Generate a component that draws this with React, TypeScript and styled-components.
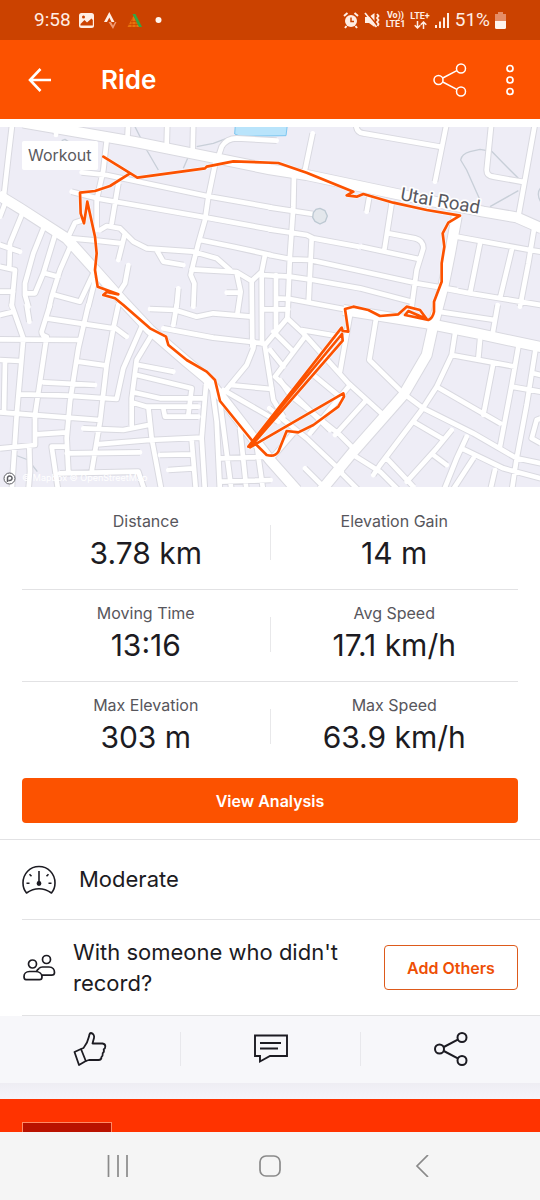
import React from "react";
import styled, { createGlobalStyle } from "styled-components";

const GlobalStyle = createGlobalStyle`
  *, *::before, *::after { box-sizing: border-box; }
  body {
    margin: 0;
    background: #fff;
    color: #1c1b22;
    font-family: Inter, "Liberation Sans", sans-serif;
  }
  button { font-family: inherit; color: inherit; cursor: pointer; }
  svg { display: block; }
`;

const Screen = styled.div`
  min-height: 100vh;
  display: flex;
  flex-direction: column;
`;

/* ---------- status bar ---------- */

const StatusBar = styled.div`
  height: 40px;
  padding: 0 34px;
  display: flex;
  align-items: center;
  justify-content: space-between;
  background: #cb4200;
  color: #ffeee4;
  font-family: Roboto, sans-serif;
`;

const StatusGroup = styled.div<{ $gap: number }>`
  display: flex;
  align-items: center;
  gap: ${(p) => p.$gap}px;
`;

const StatusText = styled.span`
  font-size: 19px;
  line-height: 24px;
`;

const NetworkLabel = styled.span`
  display: flex;
  flex-direction: column;
  align-items: center;
  font-size: 9px;
  line-height: 9px;
  font-weight: 700;
`;

/* ---------- app bar ---------- */

const AppBar = styled.header`
  height: 79px;
  padding: 0 18px 0 24px;
  display: flex;
  align-items: center;
  background: #fc5200;
  color: #fff;
`;

const IconButton = styled.button`
  padding: 0;
  border: 0;
  background: none;
  display: flex;
  align-items: center;
  justify-content: center;
`;

const Title = styled.h1`
  flex: 1;
  margin: 0 0 0 45px;
  font-size: 26px;
  line-height: 32px;
  font-weight: 600;
`;

const AppBarActions = styled.div`
  display: flex;
  align-items: center;
  gap: 31px;
`;

/* ---------- map ---------- */

const MapArea = styled.section`
  position: relative;
  margin-top: 8px;
  background: #eeedf6;
`;

const MapDrawing = styled.svg`
  width: 100%;
  height: auto;
`;

const MapTag = styled.span`
  position: absolute;
  top: 14px;
  left: 22px;
  padding: 0 6px;
  border-radius: 2px;
  background: #fff;
  color: #5b5a60;
  font-size: 16px;
  line-height: 29px;
`;

const Attribution = styled.div`
  position: absolute;
  left: 3px;
  bottom: 1px;
  display: flex;
  align-items: center;
  gap: 6px;
  color: #fff;
  font-size: 9px;
  line-height: 16px;
`;

/* ---------- stats ---------- */

const Stats = styled.dl`
  margin: 0 22px;
  padding: 11px 0 0;
`;

const StatRow = styled.div`
  height: 92px;
  padding-top: 11px;
  display: grid;
  grid-template-columns: 1fr 1px 1fr;
  border-bottom: 1px solid #e2e2e4;
  &:last-child { border-bottom: 0; }
`;

const StatDivider = styled.div`
  height: 35px;
  margin-top: 16px;
  background: #e8e8ea;
`;

const Stat = styled.div`
  text-align: center;
`;

const StatLabel = styled.dt`
  font-size: 16px;
  line-height: 24px;
  color: #57565c;
`;

const StatValue = styled.dd`
  margin: 0;
  font-size: 30px;
  line-height: 40px;
`;

const ButtonRow = styled.div`
  padding: 4px 22px 16px;
`;

const PrimaryButton = styled.button`
  display: block;
  width: 100%;
  height: 45px;
  border: 0;
  border-radius: 4px;
  background: #fc5200;
  && { color: #fff; }
  font-size: 16px;
  font-weight: 600;
`;

/* ---------- detail rows ---------- */

const DetailRow = styled.div<{ $height: number; $gap: number; $inset?: boolean }>`
  min-height: ${(p) => p.$height}px;
  display: flex;
  align-items: center;
  gap: ${(p) => p.$gap}px;
  margin-left: ${(p) => (p.$inset ? 22 : 0)}px;
  padding: 0 22px 0 ${(p) => (p.$inset ? 0 : 22)}px;
  border-top: 1px solid #e2e2e4;
`;

const DetailText = styled.p`
  flex: 1;
  margin: 0;
  font-size: 22px;
  line-height: 31px;
`;

const OutlineButton = styled.button`
  width: 134px;
  height: 45px;
  padding: 0;
  border: 1px solid #dd5a1b;
  border-radius: 4px;
  background: #fff;
  && { color: #ee4f06; }
  font-size: 16px;
  font-weight: 600;
`;

/* ---------- social bar ---------- */

const SocialBar = styled.div`
  height: 68px;
  display: grid;
  grid-template-columns: repeat(3, 1fr);
  align-items: center;
  background: linear-gradient(90deg, #fff 22px, #e2e2e4 22px) top / 100% 1px no-repeat, #f7f7fa;
`;

const SocialButton = styled(IconButton)`
  height: 34px;
  border-left: 1px solid #e8e8ec;
  &:first-child { border-left: 0; }
`;

const SectionGap = styled.div`
  height: 16px;
  background: linear-gradient(#eeedf3, #f5f4fa);
`;

const Banner = styled.section`
  flex: 1;
  min-height: 32px;
  padding: 23px 22px 0;
  display: flex;
  background: #ff3300;
`;

const BannerBadge = styled.div`
  width: 90px;
  border: 1px solid #ff8a66;
  border-bottom: 0;
  background: #b91200;
`;

/* ---------- system navigation ---------- */

const SystemNav = styled.nav`
  height: 68px;
  padding: 0 42px;
  display: grid;
  grid-template-columns: repeat(3, 1fr);
  align-items: center;
  background: #f5f5f5;
  color: #8a8a8a;
`;

/* ---------- map data ---------- */

/* Minor roads, grouped by district; each district has its own origin. */
const districts = [
  {
    name: "north-west",
    x: 0,
    y: 0,
    roads:
      "M38 0L25 110L12 225 M170 0L168 45 M322 45L310 150L290 240L290 330 M385 0L382 60 M502 0L500 80 M580 0L578 90 M830 62L710 55Q680 55 665 80L655 110 M245 157L320 165L620 228L812 262 M215 215L300 237L615 292L812 328 M650 110L625 230L615 300L595 370L580 430L572 465L583 490L580 560 M355 190L335 310 M205 350L225 308L250 300 M300 330L320 318L360 325L400 365L440 385L580 395L650 415L690 450 M215 355L290 362L365 370 M375 340L355 420 M470 390L490 425L550 435 M600 360L700 380L812 405 M385 435L375 490L352 525 M535 505L530 560 M65 285L30 370L28 440 M0 375L60 395 M15 250L0 290 M130 325L100 400L75 490L75 525L85 560 M165 345L130 460L105 520L75 520 M215 370L180 450L155 530L148 560 M135 460L175 470 M165 525L240 545L285 450 M0 440L45 450L35 560 M0 515L40 515 M285 480L265 560",
  },
  {
    name: "north-east",
    x: 810,
    y: 0,
    roads:
      "M128 40L105 150 M258 0Q255 38 280 40L510 80 M532 0L495 185 M665 0L650 150Q650 168 670 170L755 185 M797 0L745 290 M72 165L70 260L60 405L52 595 M-2 262L130 282 M-2 328L110 345L130 355L265 380 M275 380L450 418 M298 230L290 275 M365 250L343 390 M355 340L435 355Q460 362 460 385L440 450L425 560 M-2 405L65 418L120 420L440 490L560 510 M125 355L116 545 M560 350L780 390L812 395 M630 370L600 520 M725 390L690 535 M795 310L775 430L750 560 M520 505L600 520L812 555",
  },
  {
    name: "centre",
    x: 0,
    y: 0,
    roads:
      "M575 448L710 456L755 483L785 455L795 405 M785 465L870 470L940 480L1080 505L1235 545 M755 483L757 680 M785 455L786 670 M828 465L828 640 M790 568L865 568 M830 535L870 537L1030 567 M710 460L722 515L712 582 M680 518L720 518 M862 595L795 675 M862 595L910 640L1045 790L1150 885 M905 630L1025 650 M820 635L880 695 M810 690L850 740 M915 650L825 770L990 930 M795 680L820 840L850 890",
  },
  {
    name: "south-west",
    x: 0,
    y: 555,
    roads:
      "M35 0L70 100L50 330L35 560 M80 0L88 50 M0 30L40 20 M150 0L125 80Q125 92 140 95L120 230L105 330L105 420L0 430 M140 40L340 70 M265 0L235 130L210 290L200 400L205 500 M355 0L340 70L320 180L300 350L275 500 M340 65L380 95 M0 103L235 105 M0 165L60 168 M15 170L12 320 M130 232L285 240 M235 170L320 182 M60 268L200 272L350 282L370 190L425 65 M0 322L300 345 M110 388L200 382 M250 370L370 375L445 360 M290 418L450 405L605 398 M200 445L420 442 M200 425L155 425L175 560 M180 505L415 500L435 560 M88 430L90 500L85 560 M455 90L410 165L395 280L395 360 M415 180L520 200 M410 210L575 250L565 330 M400 262L480 280L610 280 M395 292L440 305L595 305 M490 310L495 335L595 335 M445 305L455 400L485 560 M480 450L575 448 M505 495L580 490 M575 405L588 560 M618 240L605 400L615 560 M635 240L650 350L660 560 M660 290L695 560 M720 370L740 560 M770 420L790 560 M660 460L812 455 M660 530L812 525 M450 12L525 15L590 35L640 25L755 35 M530 0L520 60 M490 70L640 98L790 115 M762 110L760 130L740 180L670 265 M670 255L835 350 M690 240L815 252",
  },
  {
    name: "south-east",
    x: 810,
    y: 555,
    roads:
      "M240 30L210 200 M130 210L215 280 M30 225L60 270L210 390L250 430 M240 240L120 385 M285 290L195 390 M-2 310L110 400L215 500 M105 490L175 560 M320 30L298 165L400 265L460 310L610 385L740 460L812 475 M505 20L675 45 M683 0L668 85 M555 85L545 150L500 245L455 315L330 480L310 510 M545 150L735 185 M630 105L625 160 M670 175L640 330 M500 245L690 355 M745 125L725 240L690 425 M725 245L812 260 M797 130L770 300L740 460L725 560 M790 205L812 210 M430 350L515 400 M545 375L500 430L410 530 M350 460L430 545 M490 450L530 480 M590 395L560 460L520 560 M575 430L700 490L812 520 M675 495L660 560 M210 500L270 560 M250 450L330 500L390 560 M812 340L800 345L785 400L812 415 M610 460L545 560 M70 385L5 460",
  },
];

const mainRoads = [
  "M70 8L400 65L650 115L810 148L920 165L1190 222L1450 275L1550 292L1625 325",
  "M-5 225L60 265L200 355L290 455L370 545L450 630L560 725L620 775L660 825L760 955L810 1020L890 1110",
  "M1370 290L1350 400L1330 500L1300 615L1280 705L1210 825L1060 995L965 1110",
  "M1030 570L1280 610L1430 640L1625 682",
];

const footpaths =
  "M405 20L440 90L475 150 M550 145L565 110 M590 80L640 70L680 55 M185 62L195 58L205 65 M45 1005L85 1020L112 1055 M1440 240L1400 150L1382 120Q1385 102 1410 95L1440 88L1475 94L1510 130L1555 175 M1470 260L1555 212 M1625 200Q1605 220 1625 250";

const route =
  "M310 110L412 173L615 145L620 140L700 124L835 129L920 158L1060 215L1040 226L1070 230L1090 222L1180 248L1280 270L1380 287L1345 308L1328 340L1333 380L1325 430L1325 485L1302 545L1302 575Q1298 595 1285 600L1215 585L1225 573L1280 597L1260 570L1220 560L1195 583L1140 588L1105 570L1060 560L1035 567L1045 635L1028 633L1025 623L745 980L1026 642L1028 662L750 982L1030 820L1032 830L1015 860L940 915L895 937L860 933L835 995Q825 1012 800 1005L755 960L660 843L645 780L620 755L560 720L505 675L498 650L450 625L370 555L345 535L310 525L320 516L355 523L293 500L285 450L290 400L285 350L262 245L252 310L242 280L240 218L285 213L330 198L390 160";

/* ---------- icons ---------- */

const ShareIcon = ({ weight = 2 }: { weight?: number }) => (
  <svg width="34" height="34" viewBox="0 0 34 34" fill="none" stroke="currentColor" strokeWidth={weight} aria-hidden="true">
    <circle cx="5.5" cy="17" r="4.5" />
    <circle cx="28" cy="5.5" r="4.5" />
    <circle cx="28" cy="28.5" r="4.5" />
    <path d="M9.8 15L23.8 7.6M9.8 19L23.8 26.4" />
  </svg>
);

const StatusLeftIcons = () => (
  <svg width="84" height="20" viewBox="0 0 84 20" aria-hidden="true">
    <rect x="1" y="3" width="15" height="15" rx="2.5" fill="#ffeee4" />
    <path d="M2.5 14L6.5 10L9 12.5L13.5 8.5L14.8 10V15.5H2.5Z" fill="#cb4200" />
    <circle cx="5.5" cy="7" r="1.5" fill="#cb4200" />
    <path d="M26 12L31.300 2L36.500 12H33.500L31.300 7.500L29 12Z" fill="#ffeee4" />
    <path d="M30.500 12H33L35 15.500L37 12H38.500L35 19Z" fill="#ef9a75" />
    <path d="M49.500 17L55.500 6L62 17Z" fill="#e8730c" />
    <path d="M51 14.500H60M53 11.500H58M54 8V17M58 8V17" stroke="#cb4200" strokeWidth=".7" />
    <path d="M54.500 4H57.500L64 17H61Z" fill="#31a745" />
    <circle cx="80.500" cy="10" r="3" fill="#fff5ef" />
  </svg>
);

const AlarmIcon = () => (
  <svg width="16" height="18" viewBox="0 0 16 18" aria-hidden="true">
    <circle cx="8" cy="10" r="6" fill="currentColor" />
    <path d="M1 5L4.500 2M15 5L11.500 2M3.500 15L2 17M12.500 15L14 17" stroke="currentColor" strokeWidth="2" />
    <path d="M8 6.500V10.500H11" fill="none" stroke="#cb4200" strokeWidth="1.500" />
  </svg>
);

const MuteIcon = () => (
  <svg width="17" height="18" viewBox="0 0 17 18" aria-hidden="true">
    <path d="M1 6H5L10.500 2V16L5 12H1Z" fill="currentColor" />
    <path d="M2.500 1.500L14 15" stroke="#cb4200" strokeWidth="1.500" />
    <path d="M1 2L12.500 16" stroke="currentColor" strokeWidth="1.700" />
    <path d="M13 3L14.500 5L13 7L14.500 9L13 11L14.500 13L13.500 15" fill="none" stroke="currentColor" strokeWidth="1.800" />
  </svg>
);

const ArrowsIcon = () => (
  <svg width="13" height="8" viewBox="0 0 13 8" fill="none" stroke="currentColor" strokeWidth="1.500" aria-hidden="true">
    <path d="M3.500 0V7M.7 4.200L3.500 7L6.300 4.200M9.500 8V1M6.700 3.800L9.500 1L12.300 3.800" />
  </svg>
);

const SignalIcon = () => (
  <svg width="15" height="16" viewBox="0 0 15 16" fill="currentColor" aria-hidden="true">
    <path d="M0 13H2V16H0ZM4 9.500H6V16H4ZM8 5.500H10V16H8ZM12 1H14V16H12Z" />
  </svg>
);

const BatteryIcon = () => (
  <svg width="11" height="17" viewBox="0 0 11 17" aria-hidden="true">
    <path d="M3 0H8V2H11V9H0V2H3Z" fill="#e58d66" />
    <path d="M0 9H11V15.500Q11 17 9.500 17H1.500Q0 17 0 15.500Z" fill="#fff5ef" />
  </svg>
);

const GaugeIcon = () => (
  <svg width="34" height="30" viewBox="0 0 34 30" fill="none" stroke="currentColor" strokeWidth="1.600" strokeLinejoin="round" aria-hidden="true">
    <path d="M4.500 28C2 25 1 21.500 1 18C1 8.500 8 1.500 17 1.500S33 8.500 33 18C33 21.500 32 25 29.500 28C21.500 22.500 12.500 22.500 4.500 28Z" />
    <path d="M17 6V18M4.500 18.300H7.500M26.500 18.300H29.500M7.500 9.300L9.500 11.300M26.500 9.300L24.500 11.300" />
    <circle cx="17" cy="18.500" r="1.600" fill="currentColor" />
  </svg>
);

const PeopleIcon = () => (
  <svg width="34" height="28" viewBox="0 0 34 28" fill="none" stroke="currentColor" strokeWidth="1.700" strokeLinejoin="round" aria-hidden="true">
    <circle cx="10.500" cy="10" r="4" />
    <circle cx="24.500" cy="5.500" r="4" />
    <path d="M17 14.500Q18 13 20.500 13H27C31 13 32.500 16 32.500 18.500C32.500 20.500 31 21.200 29.500 21.200H19.500" />
    <path d="M2 22.500C2 20 4 17.500 7.500 17.500H13.500C17.500 17.500 20 20 20 23C20 25 19 25.700 17.500 25.700H4C2.500 25.700 2 24.500 2 22.500Z" />
    <path d="M14.500 17.500Q15 16 17 14.500" />
  </svg>
);

const ThumbIcon = () => (
  <svg width="34" height="34" viewBox="0 0 34 34" fill="none" stroke="currentColor" strokeWidth="1.800" strokeLinejoin="round" aria-hidden="true">
    <path d="M1.500 20L8 17L12.800 29L6 33Z" />
    <path d="M8 17L10.500 16C13.500 12.500 15 9 16 4.500C16.300 2 17 1 18 1C20.500 1.500 21.500 4 21 6L19.500 11.500H29.500Q32.500 12 32.300 14.500Q32.300 16.500 30.700 17.300Q31.500 20 29.700 21.300Q30 24 28.500 25Q28.500 28 25.500 28H16L12.800 29" />
  </svg>
);

const CommentIcon = () => (
  <svg width="34" height="30" viewBox="0 0 34 30" fill="none" stroke="currentColor" strokeWidth="1.900" aria-hidden="true">
    <path d="M1 1.500H33V22H16L6 27.500V22H1Z" />
    <path d="M6 9H27M6 14.500H24" />
  </svg>
);

/* ---------- page ---------- */

const stats = [
  [
    { label: "Distance", value: "3.78 km" },
    { label: "Elevation Gain", value: "14 m" },
  ],
  [
    { label: "Moving Time", value: "13:16" },
    { label: "Avg Speed", value: "17.1 km/h" },
  ],
  [
    { label: "Max Elevation", value: "303 m" },
    { label: "Max Speed", value: "63.9 km/h" },
  ],
];

const RouteMap = () => (
  <MapDrawing viewBox="0 21 1620 1080" role="img" aria-label="Route of the ride" fill="none" strokeLinejoin="round">
    <path d="M706 15L704 42L722 49L858 47L862 15Z" fill="#b9e4fb" stroke="#7cc6f0" strokeWidth="3" />
    <path d={footpaths} stroke="#c8cfd8" strokeWidth="4" />
    <g stroke="#d9d9e0" strokeWidth="20">
      {districts.map((d) => (
        <path key={d.name} d={d.roads} transform={`translate(${d.x} ${d.y})`} />
      ))}
    </g>
    <g stroke="#d9d9e0" strokeWidth="36">
      {mainRoads.map((d) => (
        <path key={d} d={d} />
      ))}
    </g>
    <g stroke="#fff" strokeWidth="14" strokeLinecap="round">
      {districts.map((d) => (
        <path key={d.name} d={d.roads} transform={`translate(${d.x} ${d.y})`} />
      ))}
    </g>
    <g stroke="#fff" strokeWidth="30">
      {mainRoads.map((d) => (
        <path key={d} d={d} />
      ))}
    </g>
    <path d="M940 278L948 268L960 265L975 272L982 288L976 304L960 312L945 304L938 292Z" fill="#e3e7ec" stroke="#bcc8d2" strokeWidth="4" />
    <path d={route} stroke="#fff" strokeWidth="12" strokeOpacity=".6" />
    <path d={route} stroke="#fc5200" strokeWidth="8" strokeLinecap="round" />
    <text
      transform="translate(1199 240) rotate(10)"
      fontFamily="Roboto, sans-serif"
      fontSize="56"
      fill="#59595f"
      stroke="#fff"
      strokeWidth="10"
      paintOrder="stroke"
    >
      Utai Road
    </text>
  </MapDrawing>
);

export default function App() {
  return (
    <Screen>
      <GlobalStyle />
      <StatusBar>
        <StatusGroup $gap={7}>
          <StatusText>9:58</StatusText>
          <StatusLeftIcons />
        </StatusGroup>
        <StatusGroup $gap={5}>
          <AlarmIcon />
          <MuteIcon />
          <NetworkLabel>
            <span>Vo))</span>
            <span>LTE1</span>
          </NetworkLabel>
          <NetworkLabel>
            <span>LTE+</span>
            <ArrowsIcon />
          </NetworkLabel>
          <SignalIcon />
          <StatusText>51%</StatusText>
          <BatteryIcon />
        </StatusGroup>
      </StatusBar>

      <AppBar>
        <IconButton aria-label="Back">
          <svg width="32" height="32" viewBox="0 0 32 32" fill="none" stroke="currentColor" strokeWidth="2.600" aria-hidden="true">
            <path d="M16.500 5L6 16L16.500 27M6 16H27" />
          </svg>
        </IconButton>
        <Title>Ride</Title>
        <AppBarActions>
          <IconButton aria-label="Share">
            <ShareIcon weight={1.5} />
          </IconButton>
          <IconButton aria-label="More options">
            <svg width="24" height="34" viewBox="0 0 24 34" fill="none" stroke="currentColor" strokeWidth="1.700" aria-hidden="true">
              <circle cx="12" cy="5.500" r="3" />
              <circle cx="12" cy="17" r="3" />
              <circle cx="12" cy="28.500" r="3" />
            </svg>
          </IconButton>
        </AppBarActions>
      </AppBar>

      <main>
        <MapArea>
          <RouteMap />
          <MapTag>Workout</MapTag>
          <Attribution>
            <svg width="13" height="13" viewBox="0 0 13 13" fill="none" stroke="#5c5c62" aria-hidden="true">
              <circle cx="6.500" cy="6.500" r="5.500" fill="#fff" />
              <path d="M4.500 10V6.500A2.300 2.300 0 1 1 6.800 8.500H5.500" strokeWidth="1.500" />
            </svg>
            <span>© Mapbox © OpenStreetMap</span>
          </Attribution>
        </MapArea>

        <Stats>
          {stats.map(([left, right]) => (
            <StatRow key={left.label}>
              <Stat>
                <StatLabel>{left.label}</StatLabel>
                <StatValue>{left.value}</StatValue>
              </Stat>
              <StatDivider />
              <Stat>
                <StatLabel>{right.label}</StatLabel>
                <StatValue>{right.value}</StatValue>
              </Stat>
            </StatRow>
          ))}
        </Stats>
        <ButtonRow>
          <PrimaryButton>View Analysis</PrimaryButton>
        </ButtonRow>

        <DetailRow $height={80} $gap={23}>
          <GaugeIcon />
          <DetailText>Moderate</DetailText>
        </DetailRow>
        <DetailRow $height={96} $gap={17} $inset>
          <PeopleIcon />
          <DetailText>With someone who didn't record?</DetailText>
          <OutlineButton>Add Others</OutlineButton>
        </DetailRow>

        <SocialBar>
          <SocialButton aria-label="Give kudos">
            <ThumbIcon />
          </SocialButton>
          <SocialButton aria-label="Comment">
            <CommentIcon />
          </SocialButton>
          <SocialButton aria-label="Share activity">
            <ShareIcon />
          </SocialButton>
        </SocialBar>
        <SectionGap />
      </main>

      <Banner>
        <BannerBadge />
      </Banner>

      <SystemNav>
        <IconButton aria-label="Recent apps">
          <svg width="22" height="22" viewBox="0 0 22 22" fill="none" stroke="currentColor" strokeWidth="1.700" aria-hidden="true">
            <path d="M1.500 0V22M11 0V22M20 0V22" />
          </svg>
        </IconButton>
        <IconButton aria-label="Home">
          <svg width="22" height="22" viewBox="0 0 22 22" fill="none" stroke="currentColor" strokeWidth="1.700" aria-hidden="true">
            <rect x="1" y="1" width="20" height="20" rx="6" />
          </svg>
        </IconButton>
        <IconButton aria-label="Go back">
          <svg width="22" height="22" viewBox="0 0 22 22" fill="none" stroke="currentColor" strokeWidth="1.700" aria-hidden="true">
            <path d="M17 0L6 11L17 22" />
          </svg>
        </IconButton>
      </SystemNav>
    </Screen>
  );
}
